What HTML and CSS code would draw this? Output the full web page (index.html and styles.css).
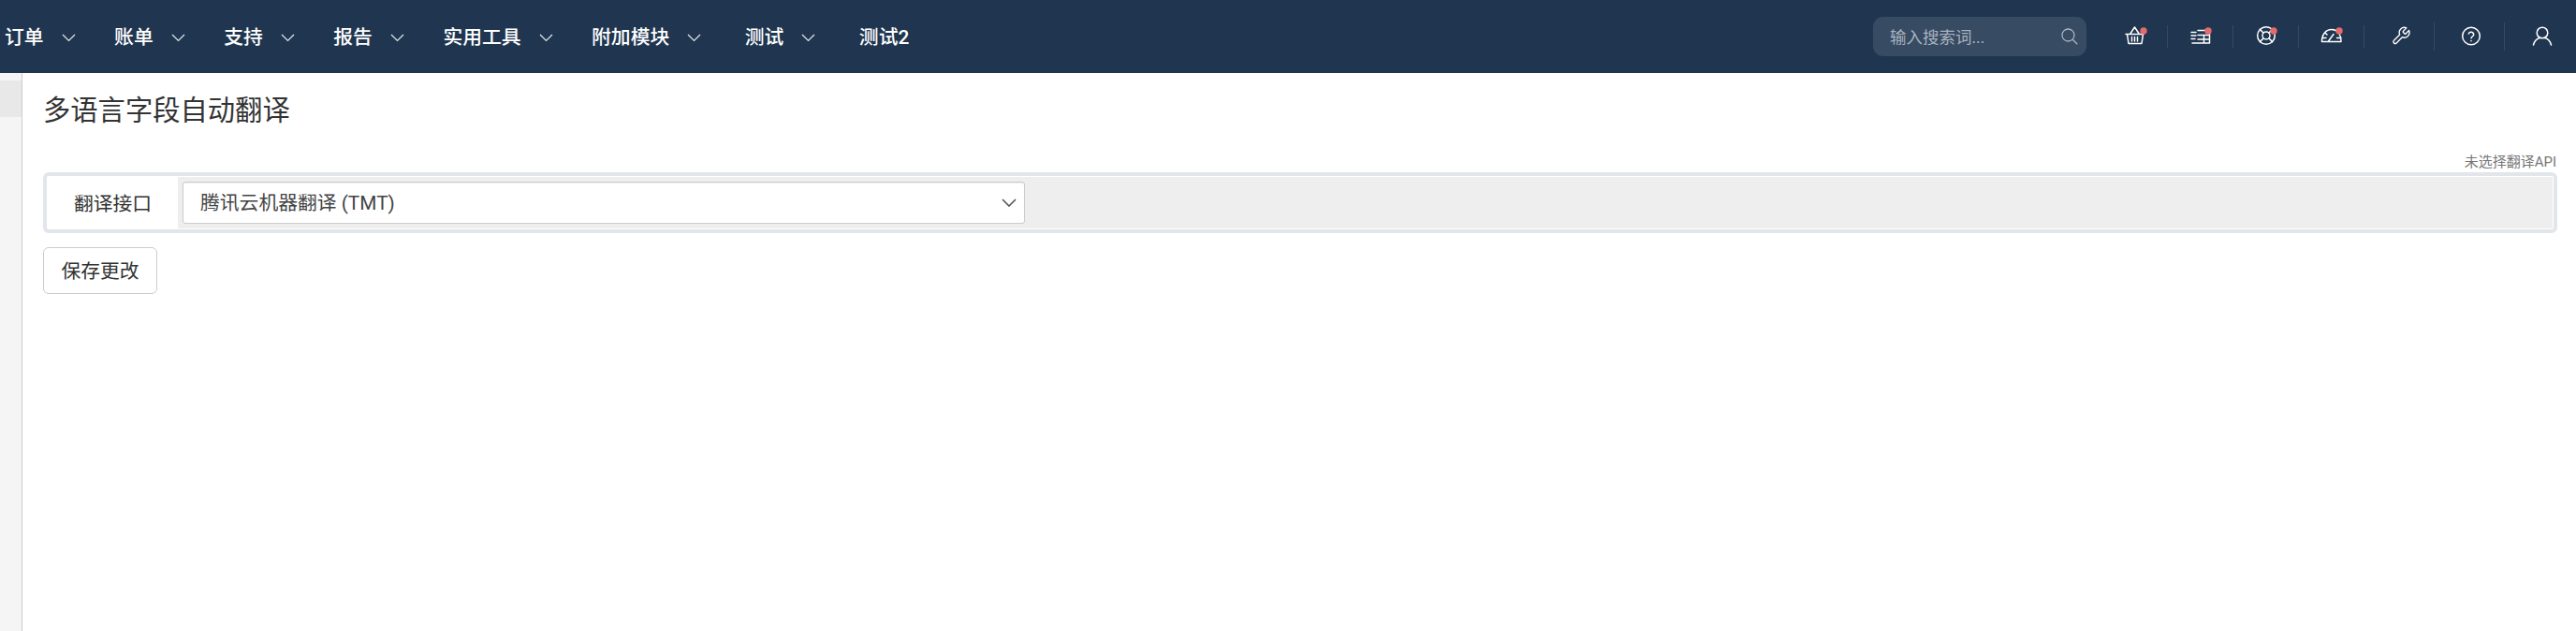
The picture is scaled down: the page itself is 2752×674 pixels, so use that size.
FILE: index.html
```html
<!DOCTYPE html>
<html>
<head>
	<meta charset="utf-8">
	<title>多语言字段自动翻译</title>
	<link rel="stylesheet" href="styles.css">
</head>
<body>
	<header class="navbar">
		<nav class="menu">
			<a class="menu-item">订单<svg class="caret" viewBox="0 0 15 9"><path d="M1 1l6.5 6.5L14 1"/></svg></a>
			<a class="menu-item">账单<svg class="caret" viewBox="0 0 15 9"><path d="M1 1l6.5 6.5L14 1"/></svg></a>
			<a class="menu-item">支持<svg class="caret" viewBox="0 0 15 9"><path d="M1 1l6.5 6.5L14 1"/></svg></a>
			<a class="menu-item">报告<svg class="caret" viewBox="0 0 15 9"><path d="M1 1l6.5 6.5L14 1"/></svg></a>
			<a class="menu-item">实用工具<svg class="caret" viewBox="0 0 15 9"><path d="M1 1l6.5 6.5L14 1"/></svg></a>
			<a class="menu-item wide">附加模块<svg class="caret" viewBox="0 0 15 9"><path d="M1 1l6.5 6.5L14 1"/></svg></a>
			<a class="menu-item wide">测试<svg class="caret" viewBox="0 0 15 9"><path d="M1 1l6.5 6.5L14 1"/></svg></a>
			<a class="menu-item">测试2</a>
		</nav>
		<div class="tools">
			<div class="search">
				<span class="search-text">输入搜索词...</span>
				<svg class="search-icon" viewBox="0 0 18 18"><circle cx="7.500" cy="7.500" r="6.500"/><path d="M12.300 12.300l5 5"/></svg>
			</div>
			<div class="tool-list">
				<a class="tool">
					<svg class="icon" viewBox="0 0 24 24"><path d="M2 9.500h19M3.500 9.500l1.500 10h14l1.500-10M6.500 9.500L11.500 2l5 7.500M8.500 12.500v4.500M11.500 12.500v4.500M14.500 12.500v4.500"/><circle class="dot" cx="21" cy="6" r="3.700"/></svg>
				</a>
				<a class="tool">
					<svg class="icon" viewBox="0 0 24 24"><path d="M9 5.500h12.500v13.500H3M9 10.500h12.500M9 15h12.500M15.500 10.500V19M2 7.500h5M2 11h5M2 14.500h4"/><circle class="dot" cx="20" cy="6" r="3.700"/></svg>
				</a>
				<a class="tool">
					<svg class="icon" viewBox="0 0 24 24"><circle cx="12" cy="11" r="9.300"/><circle cx="12" cy="11" r="4"/><path d="M5.400 4.400l3.800 3.800M18.600 4.400l-3.800 3.800M5.400 17.600l3.800-3.800M18.600 17.600l-3.800-3.800"/><circle class="dot" cx="20" cy="6" r="3.700"/></svg>
				</a>
				<a class="tool">
					<svg class="icon" viewBox="0 0 24 24"><path d="M1.500 17.500c0-8 4.500-13 10.500-13 5 0 10 4 10 13zM2 13.500h4M17.500 13.500H22M8.500 17l5.500-7.500M5 8l2 2"/><circle class="dot" cx="20" cy="6" r="3.700"/></svg>
				</a>
				<a class="tool wide">
					<svg class="icon" viewBox="0 0 24 24"><path transform="translate(1.200 .6) scale(.9)" d="M14.700 6.300a1 1 0 000 1.400l1.600 1.600a1 1 0 001.400 0l3.770-3.770a6 6 0 01-7.940 7.940l-6.910 6.910a2.120 2.120 0 01-3-3l6.910-6.910a6 6 0 017.940-7.940z"/></svg>
				</a>
				<a class="tool wide">
					<svg class="icon" viewBox="0 0 24 24"><circle cx="12" cy="11.500" r="9.300"/><path d="M9.300 9a2.800 2.800 0 015.400 1c0 1.800-2.700 2.200-2.700 3.800M12 16.500v.3"/></svg>
				</a>
				<a class="tool last">
					<svg class="icon" viewBox="0 0 24 24"><circle cx="12" cy="8" r="5.800"/><path d="M2.500 21c1-4 3.500-6.500 6.500-7.500M21.500 21c-1-4-3.500-6.500-6.500-7.500"/></svg>
				</a>
			</div>
		</div>
	</header>
	<div class="page">
		<aside class="sidebar"><div class="sidebar-active"></div></aside>
		<main class="content">
			<h1 class="title">多语言字段自动翻译</h1>
			<p class="note">未选择翻译API</p>
			<div class="config-table">
				<div class="config-row">
					<label class="config-label">翻译接口</label>
					<div class="config-field">
						<select class="select">
							<option>腾讯云机器翻译 (TMT)</option>
						</select>
					</div>
				</div>
			</div>
			<button class="btn">保存更改</button>
		</main>
	</div>
</body>
</html>
```

FILE: styles.css
```css
/* fonts */
body {
	font-family: Roboto, "Noto Sans CJK SC", sans-serif;
	font-size: 20.8px;
	color: #333;
}

.menu-item {
	font-weight: 500;
}

.title {
	font-size: 29.3px;
	font-weight: 400;
}

.note {
	font-size: 15px;
	text-align: right;
}

.search-text {
	font-size: 17.5px;
}

/* layout */
html, body {
	height: 100%;
	margin: 0;
	overflow: hidden;
}

.navbar {
	display: flex;
	justify-content: space-between;
	align-items: center;
	height: 78px;
	padding-left: 5px;
}

.menu {
	display: flex;
	align-items: center;
	padding-bottom: 3px;
}

.menu-item {
	display: flex;
	align-items: center;
	margin-right: 41.5px;
	white-space: nowrap;
}

.menu-item.wide {
	margin-right: 46.5px;
}

.caret {
	width: 15px;
	height: 9px;
	margin: 5px 0 0 19px;
}

.tools {
	display: flex;
	align-items: center;
}

.search {
	display: flex;
	justify-content: space-between;
	align-items: center;
	box-sizing: border-box;
	width: 228px;
	height: 42px;
	margin-right: 17px;
	padding: 0 9px 0 18px;
}

.search-text {
	padding-bottom: 2px;
}

.search-icon {
	width: 18px;
	height: 18px;
}

.tool-list {
	display: flex;
	align-items: center;
}

.tool {
	display: flex;
	justify-content: center;
	align-items: center;
	box-sizing: border-box;
	width: 70px;
	height: 24px;
}

.tool.wide {
	width: 75px;
	height: 30px;
	padding-left: 3px;
}

.tool.last {
	width: 76px;
	height: 30px;
	padding-left: 3px;
}

.icon {
	flex: none;
	width: 24px;
	height: 24px;
}

.page {
	display: flex;
	height: calc(100% - 78px);
}

.sidebar {
	box-sizing: border-box;
	width: 24px;
	padding-top: 8px;
}

.sidebar-active {
	height: 39px;
}

.content {
	flex: 1;
	padding: 26px 20px 0 22px;
}

.title {
	margin: 0;
	line-height: 29px;
}

.note {
	margin: 30px 1px 0 0;
	line-height: 21px;
}

.config-row {
	display: flex;
	align-items: stretch;
	height: 55px;
}

.config-label {
	display: flex;
	justify-content: center;
	align-items: center;
	box-sizing: border-box;
	width: 139px;
	padding-bottom: 2px;
}

.config-field {
	display: flex;
	align-items: center;
	padding-left: 5px;
}

.select {
	width: 900px;
	height: 45px;
	padding: 0 40px 0 18px;
	font: inherit;
	appearance: none;
	background: #fff url("data:image/svg+xml,%3Csvg xmlns='http://www.w3.org/2000/svg' viewBox='0 0 16 9'%3E%3Cpath d='M1 1l7 7 7-7' fill='none' stroke='%23555' stroke-width='1.600'/%3E%3C/svg%3E") no-repeat right 8px center / 16px 9px;
}

.btn {
	display: block;
	width: 122px;
	height: 50px;
	margin-top: 15px;
	padding: 0 0 2px;
	font: inherit;
}

/* colors */
.navbar {
	background-color: #203650;
	color: #fff;
}

.caret {
	fill: none;
	stroke: #e4e7eb;
	stroke-width: 1.2;
}

.search {
	background-color: #374b63;
	border-radius: 11px;
	color: #a9b3bf;
}

.search-icon {
	fill: none;
	stroke: #a9b3bf;
	stroke-width: 1.3;
}

.tool {
	border-right: 1px solid #344a63;
}

.tool.last {
	border-right: 0;
}

.icon {
	fill: none;
	stroke: #fff;
	stroke-width: 1.5;
	stroke-linecap: round;
	stroke-linejoin: round;
	overflow: visible;
}

.icon .dot {
	fill: #e36b6b;
	stroke: none;
}

.sidebar {
	background-color: #f5f5f5;
	border-right: 1px solid #ccc;
}

.sidebar-active {
	background-color: #e8e8e8;
}

.title {
	color: #333;
}

.note {
	color: #777;
}

.config-table {
	border: 4px solid #e2e6ea;
	border-radius: 6px;
}

.config-row {
	background-color: #eee;
	border: 1px solid #fff;
	border-radius: 2px;
}

.config-label {
	background-color: #fff;
}

.select {
	border: 1px solid #ccc;
	border-radius: 3px;
	box-shadow: inset 0 1px 1px rgba(0, 0, 0, 0.075);
	color: #444;
}

.btn {
	background-color: #fff;
	border: 1px solid #ccc;
	border-radius: 6px;
	color: #333;
}
```
